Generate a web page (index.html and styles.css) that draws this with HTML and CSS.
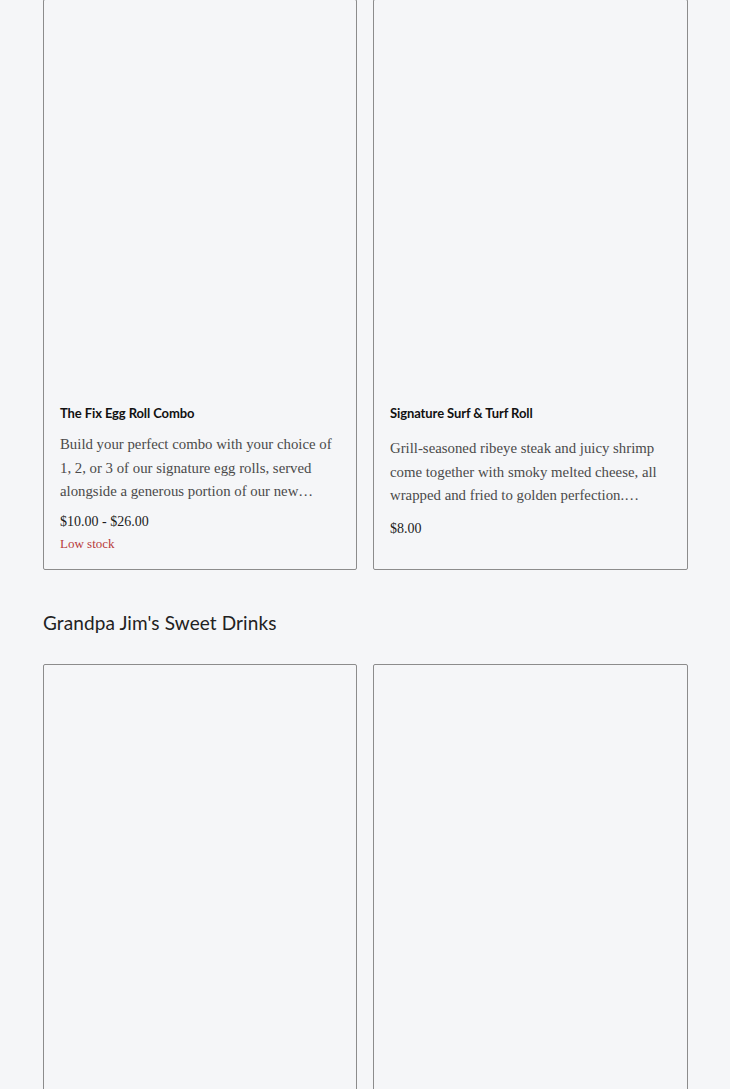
FILE: index.html
```html
<!DOCTYPE html>
<html lang="en">
<head>
<meta charset="utf-8">
<title>Menu</title>
<link rel="stylesheet" href="styles.css">
</head>
<body>
<main class="page">
  <section class="section section-first">
    <div class="grid">
      <article class="card">
        <div class="card-media"></div>
        <div class="card-info">
          <h3 class="card-title">The Fix Egg Roll Combo</h3>
          <p class="card-desc">Build your perfect combo with your choice of 1, 2, or 3 of our signature egg rolls, served alongside a generous portion of our new…</p>
          <p class="card-price">$10.00 - $26.00</p>
          <p class="card-stock">Low stock</p>
        </div>
      </article>
      <article class="card">
        <div class="card-media"></div>
        <div class="card-info">
          <h3 class="card-title">Signature Surf &amp; Turf Roll</h3>
          <p class="card-desc card-desc-loose">Grill-seasoned ribeye steak and juicy shrimp come together with smoky melted cheese, all wrapped and fried to golden perfection.…</p>
          <p class="card-price card-price-loose">$8.00</p>
        </div>
      </article>
    </div>
  </section>
  <section class="section">
    <h2 class="section-title">Grandpa Jim's Sweet Drinks</h2>
    <div class="grid">
      <article class="card">
        <div class="card-media card-media-tall"></div>
      </article>
      <article class="card">
        <div class="card-media card-media-tall"></div>
      </article>
    </div>
  </section>
</main>
</body>
</html>
```

FILE: styles.css
```css
html, body {
  margin: 0;
  padding: 0;
  background: #f5f6f8;
}
body {
  font-family: "Liberation Serif", "Times New Roman", serif;
  color: #222;
  overflow: hidden;
}
.page {
  padding: 0 42px 0 43px;
}
.section-first {
  margin-top: -1px;
}
.grid {
  display: grid;
  grid-template-columns: 314px 315px;
  column-gap: 16px;
}
.card {
  border: 1px solid #8c8c8c;
  border-radius: 2px;
  background: #f5f6f8;
  display: flex;
  flex-direction: column;
}
.card-media {
  height: 387px;
}
.card-media-tall {
  height: 460px;
}
.card-info {
  padding: 16px 16px 16px 16px;
}
.card-title {
  margin: 0;
  font-family: "Lato", "Open Sans", sans-serif;
  font-weight: 700;
  font-size: 13px;
  line-height: 20px;
  color: #111;
  letter-spacing: -0.1px;
}
.card-desc {
  margin: 10px 0 0;
  font-size: 14.8px;
  line-height: 23.5px;
  color: #4a4a4a;
}
.card-desc-loose {
  margin-top: 14px;
}
.card-price {
  margin: 8px 0 0;
  font-size: 14px;
  line-height: 20px;
  color: #1c1c1c;
}
.card-price-loose {
  margin-top: 11px;
}
.card-stock {
  margin: 3px 0 0;
  font-size: 13px;
  line-height: 18px;
  color: #b83a3a;
}
.section-title {
  margin: 40px 0 28px;
  font-family: "Lato", "Open Sans", sans-serif;
  font-weight: 400;
  font-size: 19px;
  line-height: 26px;
  color: #222;
  letter-spacing: 0.1px;
}
```
